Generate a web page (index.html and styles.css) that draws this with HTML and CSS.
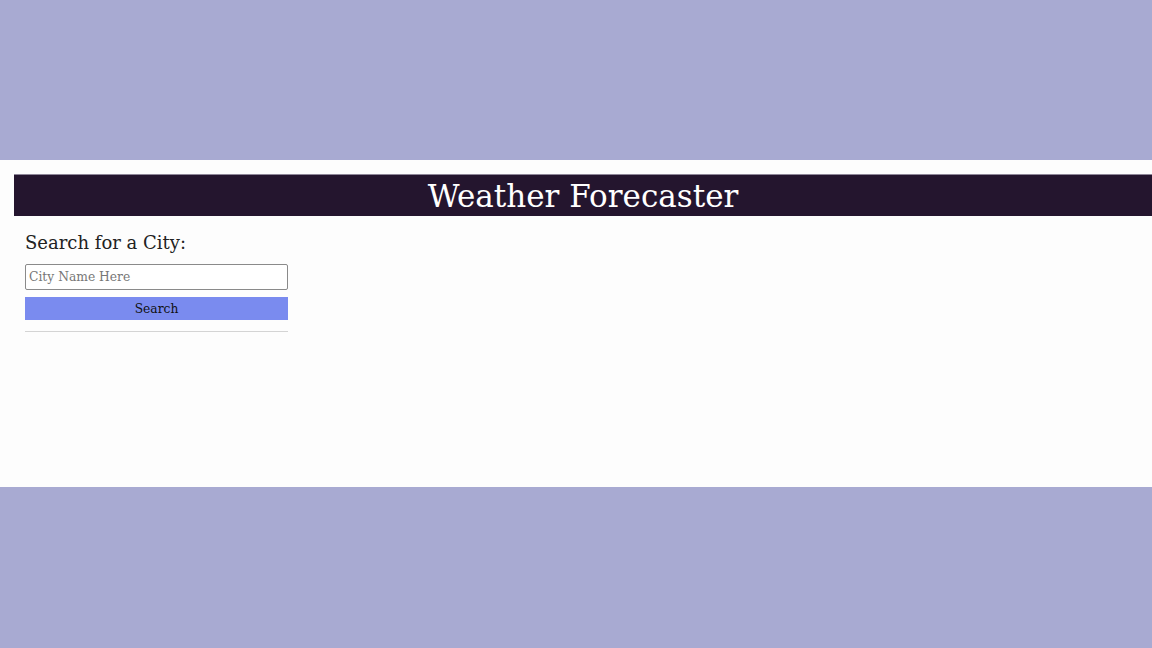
FILE: index.html
```html
<!DOCTYPE html>
<html>
<head>
<meta charset="utf-8">
<link rel="stylesheet" href="styles.css">
</head>
<body>
<div class="frame">
  <header class="banner"><h1 class="title">Weather Forecaster</h1></header>
  <aside class="sidebar">
    <h2 class="label">Search for a City:</h2>
    <input class="city-input" type="text" placeholder="City Name Here">
    <button class="search-btn">Search</button>
    <hr class="divider">
  </aside>
</div>
</body>
</html>
```
FILE: styles.css
```css
html, body { margin: 0; padding: 0; }
body {
  background: #a8aad2;
  height: 648px;
  font-family: "DejaVu Serif", "Liberation Serif", serif;
}
.frame {
  margin-top: 160px;
  height: 327px;
  background: #fdfdfd;
  padding: 14px 0 0 14px;
  box-sizing: border-box;
}
.banner {
  height: 42px;
  background: #24152e;
  border-top: 1px solid #8e8698;
  box-sizing: border-box;
  display: flex;
  align-items: center;
  justify-content: center;
}
.title {
  margin: 0;
  color: #ffffff;
  font-weight: normal;
  font-size: 31px;
  line-height: 40px;
}
.sidebar {
  width: 263px;
  margin-left: 11px;
  display: flex;
  flex-direction: column;
}
.label {
  margin: 15px 0 0 0;
  font-weight: normal;
  font-size: 18px;
  line-height: 24px;
  color: #222;
}
.city-input {
  margin-top: 9px;
  height: 26px;
  box-sizing: border-box;
  border: 1px solid #8a8a8a;
  border-radius: 2px;
  padding: 0 3px;
  font-family: inherit;
  font-size: 12.3px;
}
.city-input::placeholder { color: #777; }
.search-btn {
  margin-top: 7px;
  height: 23px;
  border: none;
  background: #7a8bef;
  font-family: inherit;
  font-size: 12.3px;
  color: #111;
  padding: 0;
}
.divider {
  margin: 11px 0 0 0;
  border: none;
  border-top: 1px solid #d4d4d4;
  width: 100%;
}
```
